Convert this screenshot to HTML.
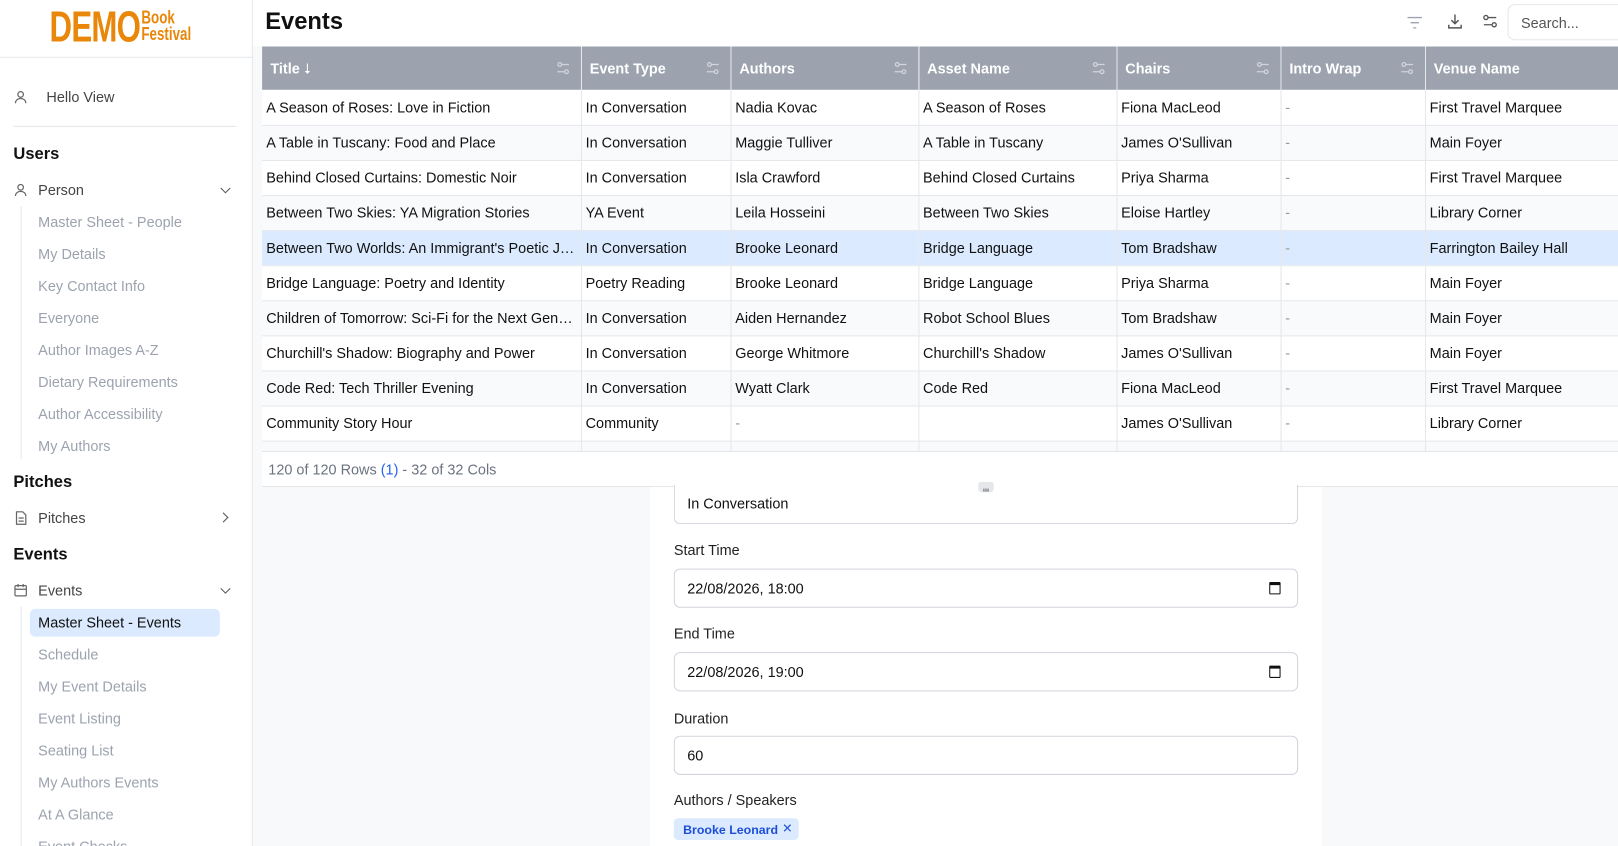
<!DOCTYPE html><html><head><meta charset="utf-8"><style>
*{box-sizing:border-box;margin:0;padding:0}
body{width:1618px;height:846px;overflow:hidden;font-family:"Liberation Sans",sans-serif;background:#fff;color:#111;font-size:14px}
#w{position:absolute;left:0;top:0;width:1568px;height:820px;transform:scale(1.03189);transform-origin:0 0;overflow:hidden}
.sb{position:absolute;left:0;top:0;width:245px;height:820px;border-right:1px solid #e5e7eb;background:#fff}
.logo{position:absolute;left:48px;top:6px;color:#e8870a;font-weight:bold}
.sb .h{position:absolute;left:13px;font-size:16px;font-weight:600;color:#111}
.sb .it{position:absolute;left:13px;font-size:14px;color:#444;display:flex;align-items:center;gap:10px}
.sb .sub{position:absolute;left:37px;font-size:14px;color:#9ca3af}
.vl{position:absolute;left:20px;width:1px;background:#e5e7eb}
.chev{position:absolute;left:215px;width:7px;height:7px;border-right:1.5px solid #555;border-bottom:1.5px solid #555}
.main{position:absolute;left:245px;top:0;right:0;height:820px;background:#f8f9fa}
.top{position:absolute;left:245px;top:0;right:0;height:45px;background:#fff}
table{position:absolute;left:254px;top:45px;border-collapse:collapse;table-layout:fixed;width:1400px;background:#fff}
th{background:#9ca3af;color:#fff;font-weight:bold;text-align:left;height:42px;padding:0 8px;font-size:14px;border-right:1px solid #e5e7eb;position:relative}
td{height:34px;padding:0 4px;border-right:1px solid #e5e7eb;border-bottom:1px solid #e5e7eb;white-space:nowrap;overflow:hidden;text-overflow:ellipsis;font-size:14px;color:#111}
tr.e td{background:#f9fafb}
tr.s td{background:#dbeafe}
.fi{position:absolute;right:10px;top:14px}
.foot{position:absolute;left:254px;top:437px;right:0;height:35px;background:#fff;border-top:1px solid #e5e7eb;border-bottom:1px solid #e5e7eb;font-size:14px;color:#6b7280;padding:9px 6px}
.panel{position:absolute;left:630px;top:472px;width:651px;height:374px;background:#fff}
.inp{position:absolute;left:653px;width:605px;height:38px;border:1px solid #d1d5db;border-radius:6px;background:#fff;padding:0 12px;font-size:14px;line-height:36px;color:#111}
.lbl{position:absolute;left:653px;font-size:14px;color:#222}
.cal{position:absolute;right:16px;top:12px;width:11px;height:12px;border:1.5px solid #111;border-top-width:3px;border-radius:1px}
</style></head><body><div id="w">
<div class="main"></div>
<div class="top">
<div style="position:absolute;left:12px;top:7px;font-size:23px;font-weight:bold">Events</div>
<svg style="position:absolute;left:1117px;top:13px" width="18" height="18" viewBox="0 0 18 18" fill="none" stroke="#9ca3af" stroke-width="1.3"><path d="M2 4h14M5 9h8M7.5 14h3"/></svg>
<svg style="position:absolute;left:1156px;top:12px" width="18" height="18" viewBox="0 0 18 18" fill="none" stroke="#555" stroke-width="1.4"><path d="M9 2v9M5.5 7.5L9 11l3.5-3.5M3 12v3h12v-3"/></svg>
<svg style="position:absolute;left:1190px;top:12px" width="18" height="18" viewBox="0 0 18 18" fill="none" stroke="#555" stroke-width="1.3"><circle cx="5" cy="5" r="2"/><path d="M7 5h8M3 12h8"/><circle cx="13" cy="12" r="2"/></svg>
<div style="position:absolute;left:1216px;top:4px;width:170px;height:35px;border:1px solid #e5e7eb;border-radius:7px;padding:9px 12px;color:#555;font-size:14px">Search...</div>
</div>
<table>
<colgroup><col style="width:309px"><col style="width:145px"><col style="width:182px"><col style="width:192px"><col style="width:159px"><col style="width:140px"><col style="width:273px"></colgroup>
<tr><th>Title <span style="font-weight:normal">⭣</span><svg class="fi" width="14" height="14" viewBox="0 0 14 14" fill="none" stroke="#d1d5db" stroke-width="1.2"><circle cx="3.5" cy="3.5" r="1.8"/><path d="M5.5 3.5h7M1 10.5h7"/><circle cx="10" cy="10.5" r="1.8"/></svg></th><th>Event Type<svg class="fi" width="14" height="14" viewBox="0 0 14 14" fill="none" stroke="#d1d5db" stroke-width="1.2"><circle cx="3.5" cy="3.5" r="1.8"/><path d="M5.5 3.5h7M1 10.5h7"/><circle cx="10" cy="10.5" r="1.8"/></svg></th><th>Authors<svg class="fi" width="14" height="14" viewBox="0 0 14 14" fill="none" stroke="#d1d5db" stroke-width="1.2"><circle cx="3.5" cy="3.5" r="1.8"/><path d="M5.5 3.5h7M1 10.5h7"/><circle cx="10" cy="10.5" r="1.8"/></svg></th><th>Asset Name<svg class="fi" width="14" height="14" viewBox="0 0 14 14" fill="none" stroke="#d1d5db" stroke-width="1.2"><circle cx="3.5" cy="3.5" r="1.8"/><path d="M5.5 3.5h7M1 10.5h7"/><circle cx="10" cy="10.5" r="1.8"/></svg></th><th>Chairs<svg class="fi" width="14" height="14" viewBox="0 0 14 14" fill="none" stroke="#d1d5db" stroke-width="1.2"><circle cx="3.5" cy="3.5" r="1.8"/><path d="M5.5 3.5h7M1 10.5h7"/><circle cx="10" cy="10.5" r="1.8"/></svg></th><th>Intro Wrap<svg class="fi" width="14" height="14" viewBox="0 0 14 14" fill="none" stroke="#d1d5db" stroke-width="1.2"><circle cx="3.5" cy="3.5" r="1.8"/><path d="M5.5 3.5h7M1 10.5h7"/><circle cx="10" cy="10.5" r="1.8"/></svg></th><th>Venue Name</th></tr>
<tr><td>A Season of Roses: Love in Fiction</td><td>In Conversation</td><td>Nadia Kovac</td><td>A Season of Roses</td><td>Fiona MacLeod</td><td style="color:#999">-</td><td>First Travel Marquee</td></tr>
<tr class="e"><td>A Table in Tuscany: Food and Place</td><td>In Conversation</td><td>Maggie Tulliver</td><td>A Table in Tuscany</td><td>James O'Sullivan</td><td style="color:#999">-</td><td>Main Foyer</td></tr>
<tr><td>Behind Closed Curtains: Domestic Noir</td><td>In Conversation</td><td>Isla Crawford</td><td>Behind Closed Curtains</td><td>Priya Sharma</td><td style="color:#999">-</td><td>First Travel Marquee</td></tr>
<tr class="e"><td>Between Two Skies: YA Migration Stories</td><td>YA Event</td><td>Leila Hosseini</td><td>Between Two Skies</td><td>Eloise Hartley</td><td style="color:#999">-</td><td>Library Corner</td></tr>
<tr class="s"><td>Between Two Worlds: An Immigrant's Poetic Journey</td><td>In Conversation</td><td>Brooke Leonard</td><td>Bridge Language</td><td>Tom Bradshaw</td><td style="color:#999">-</td><td>Farrington Bailey Hall</td></tr>
<tr><td>Bridge Language: Poetry and Identity</td><td>Poetry Reading</td><td>Brooke Leonard</td><td>Bridge Language</td><td>Priya Sharma</td><td style="color:#999">-</td><td>Main Foyer</td></tr>
<tr class="e"><td>Children of Tomorrow: Sci-Fi for the Next Generation</td><td>In Conversation</td><td>Aiden Hernandez</td><td>Robot School Blues</td><td>Tom Bradshaw</td><td style="color:#999">-</td><td>Main Foyer</td></tr>
<tr><td>Churchill's Shadow: Biography and Power</td><td>In Conversation</td><td>George Whitmore</td><td>Churchill's Shadow</td><td>James O'Sullivan</td><td style="color:#999">-</td><td>Main Foyer</td></tr>
<tr class="e"><td>Code Red: Tech Thriller Evening</td><td>In Conversation</td><td>Wyatt Clark</td><td>Code Red</td><td>Fiona MacLeod</td><td style="color:#999">-</td><td>First Travel Marquee</td></tr>
<tr><td>Community Story Hour</td><td>Community</td><td style="color:#999">-</td><td></td><td>James O'Sullivan</td><td style="color:#999">-</td><td>Library Corner</td></tr>
<tr class="e"><td style="height:10px"></td><td style="height:10px"></td><td style="height:10px"></td><td style="height:10px"></td><td style="height:10px"></td><td style="height:10px"></td><td style="height:10px"></td></tr>
</table>
<div class="foot">120 of 120 Rows <span style="color:#2563eb">(1)</span> - 32 of 32 Cols</div>
<div class="panel"></div>
<div class="inp" style="top:470px;border-top:none;border-radius:0 0 6px 6px">In Conversation</div>
<div style="position:absolute;left:948px;top:467px;width:15px;height:10px;background:#e5e7eb;border-radius:3px"><svg width="15" height="10" viewBox="0 0 15 10" fill="#666"><rect x="5" y="3.5" width="1" height="3"/><rect x="7" y="3.5" width="1" height="3"/><rect x="9" y="3.5" width="1" height="3"/></svg></div>
<div class="lbl" style="top:525px">Start Time</div>
<div class="inp" style="top:551px">22/08/2026, 18:00<div class="cal"></div></div>
<div class="lbl" style="top:606px">End Time</div>
<div class="inp" style="top:632px">22/08/2026, 19:00<div class="cal"></div></div>
<div class="lbl" style="top:688px">Duration</div>
<div class="inp" style="top:713px">60</div>
<div class="lbl" style="top:767px">Authors / Speakers</div>
<div style="position:absolute;left:653px;top:793px;width:121px;height:21px;background:#dbeafe;border-radius:4px;color:#1d4ed8;font-size:12px;font-weight:bold;padding:4px 0 0 9px;white-space:nowrap">Brooke Leonard<span style="position:absolute;left:105px;top:3px;font-weight:normal">✕</span></div>

<div class="sb">
<div class="logo"><span style="position:absolute;left:0;top:0;font-size:42px;line-height:40px;letter-spacing:-1px;transform:scaleX(.72);display:inline-block;transform-origin:left;white-space:nowrap">DEMO</span><span style="position:absolute;left:89px;top:3px;font-size:18px;line-height:16px;white-space:nowrap;transform:scaleX(.72);transform-origin:left">Book<br>Festival</span></div>
<div style="position:absolute;left:0;top:55px;width:245px;height:1px;background:#e5e7eb"></div>
<div class="it" style="top:86px"><svg width="14" height="14" viewBox="0 0 14 14" fill="none" stroke="#666" stroke-width="1.2"><circle cx="7" cy="4.5" r="2.7"/><path d="M2 13c0-3 2.3-4.5 5-4.5s5 1.5 5 4.5"/></svg><span style="margin-left:8px">Hello View</span></div>
<div style="position:absolute;left:13px;top:122px;width:216px;height:1px;background:#e5e7eb"></div>
<div class="h" style="top:141px">Users</div>
<div class="it" style="top:176px"><svg width="14" height="14" viewBox="0 0 14 14" fill="none" stroke="#666" stroke-width="1.2"><circle cx="7" cy="4.5" r="2.7"/><path d="M2 13c0-3 2.3-4.5 5-4.5s5 1.5 5 4.5"/></svg>Person</div>
<div class="chev" style="top:179px;transform:rotate(45deg)"></div>
<div class="vl" style="top:200px;height:245px"></div>
<div class="sub" style="top:207px">Master Sheet - People</div>
<div class="sub" style="top:238px">My Details</div>
<div class="sub" style="top:269px">Key Contact Info</div>
<div class="sub" style="top:300px">Everyone</div>
<div class="sub" style="top:331px">Author Images A-Z</div>
<div class="sub" style="top:362px">Dietary Requirements</div>
<div class="sub" style="top:393px">Author Accessibility</div>
<div class="sub" style="top:424px">My Authors</div>
<div class="h" style="top:459px">Pitches</div>
<div class="it" style="top:494px"><svg width="14" height="14" viewBox="0 0 14 14" fill="none" stroke="#666" stroke-width="1.2"><path d="M3 1h6l3 3v9H3z M5 7h5M5 10h5"/></svg>Pitches</div>
<div class="chev" style="top:498px;left:213px;transform:rotate(-45deg)"></div>
<div class="h" style="top:529px">Events</div>
<div class="it" style="top:564px"><svg width="14" height="14" viewBox="0 0 14 14" fill="none" stroke="#666" stroke-width="1.2"><rect x="1.5" y="2.5" width="11" height="10" rx="1"/><path d="M1.5 6h11M4.5 1v3M9.5 1v3"/></svg>Events</div>
<div class="chev" style="top:567px;transform:rotate(45deg)"></div>
<div class="vl" style="top:588px;height:258px"></div>
<div style="position:absolute;left:29px;top:590px;width:184px;height:27px;background:#dbeafe;border-radius:5px"></div>
<div class="sub" style="top:595px;color:#111">Master Sheet - Events</div>
<div class="sub" style="top:626px">Schedule</div>
<div class="sub" style="top:657px">My Event Details</div>
<div class="sub" style="top:688px">Event Listing</div>
<div class="sub" style="top:719px">Seating List</div>
<div class="sub" style="top:750px">My Authors Events</div>
<div class="sub" style="top:781px">At A Glance</div>
<div class="sub" style="top:812px">Event Checks</div>
</div>
</div></body></html>
